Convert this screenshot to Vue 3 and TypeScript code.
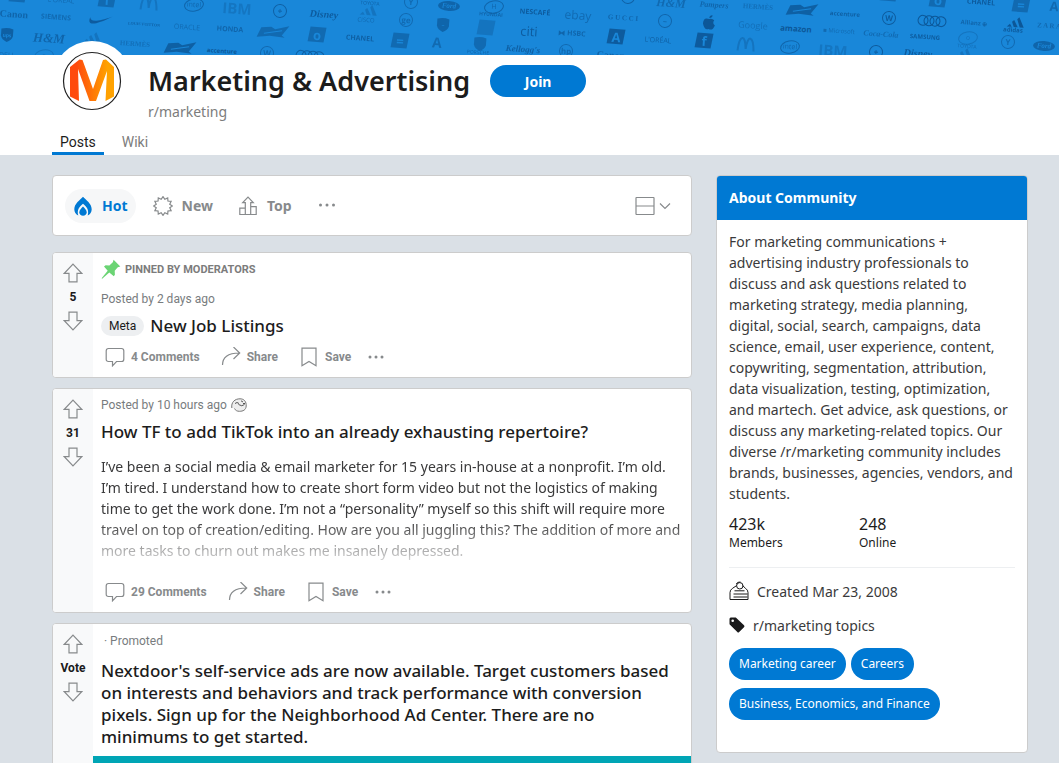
<script setup lang="ts">
import { ref } from 'vue'

type MarkKind = 'text' | 'block' | 'ring' | 'oval' | 'rings' | 'bow' | 'swoosh' | 'shield' | 'apple' | 'peaks' | 'car' | 'arch'

interface Mark {
  x: number
  y: number
  kind: MarkKind
  label?: string
  size?: number
  font?: 'serif' | 'sans' | 'script' | 'heavy'
  tone?: number
}

const marks: Mark[] = [
  { x: 18, y: -5, kind: 'block' },
  { x: 61, y: 0, kind: 'text', label: "L'ORÉAL", size: 7 },
  { x: 107, y: 0, kind: 'block', label: 'f' },
  { x: 149, y: 3, kind: 'arch', tone: 0.4 },
  { x: 194, y: 5, kind: 'oval', label: 'intel', tone: 0.7 },
  { x: 237, y: 8, kind: 'text', label: 'IBM', size: 15, font: 'heavy', tone: 0.35 },
  { x: 280, y: 11, kind: 'ring', label: '+', tone: 0.8 },
  { x: 324, y: 14, kind: 'text', label: 'Disney', size: 10, font: 'script', tone: 0.9 },
  { x: 14, y: 14, kind: 'text', label: 'Canon', size: 10, font: 'serif', tone: 0.7 },
  { x: 56, y: 17, kind: 'text', label: 'SIEMENS', size: 7, font: 'heavy' },
  { x: 101, y: 21, kind: 'swoosh', tone: 0.9 },
  { x: 144, y: 24, kind: 'text', label: 'LOUIS VUITTON', size: 4, font: 'serif', tone: 0.8 },
  { x: 187, y: 27, kind: 'text', label: 'ORACLE', size: 7, tone: 0.6 },
  { x: 230, y: 29, kind: 'text', label: 'HONDA', size: 7, font: 'heavy', tone: 0.7 },
  { x: 273, y: 32, kind: 'bow' },
  { x: 317, y: 35, kind: 'block', label: 'o' },
  { x: 7, y: 35, kind: 'shield', label: 'ups', tone: 0.8 },
  { x: 49, y: 38, kind: 'text', label: 'H&M', size: 13, font: 'script', tone: 0.7 },
  { x: 91, y: 38, kind: 'peaks', tone: 0.4 },
  { x: 135, y: 44, kind: 'text', label: 'HERMÈS', size: 7, font: 'serif', tone: 0.5 },
  { x: 180, y: 48, kind: 'bow', tone: 0.8 },
  { x: 222, y: 51, kind: 'text', label: 'accenture', size: 6, font: 'heavy', tone: 1 },
  { x: 267, y: 53, kind: 'ring', label: 'W' },
  { x: 310, y: 56, kind: 'rings', tone: 0.8 },
  { x: 7, y: 55, kind: 'text', label: 'DELL', size: 7 },
  { x: 44, y: 56, kind: 'oval', label: 'o', tone: 0.4 },
  { x: 370, y: 3, kind: 'text', label: 'TOYOTA', size: 5, tone: 0.8 },
  { x: 411, y: 2, kind: 'ring', label: 'Y' },
  { x: 449, y: 6, kind: 'car', label: 'Ford', tone: 0.7 },
  { x: 494, y: 7, kind: 'oval', label: 'H', tone: 0.7 },
  { x: 491, y: 14, kind: 'text', label: 'HYUNDAI', size: 5, font: 'heavy', tone: 0.7 },
  { x: 535, y: 12, kind: 'text', label: 'NESCAFÉ', size: 7, font: 'heavy', tone: 0.9 },
  { x: 578, y: 15, kind: 'text', label: 'ebay', size: 12, tone: 0.6 },
  { x: 623, y: 18, kind: 'text', label: 'G U C C I', size: 7, font: 'serif', tone: 0.7 },
  { x: 665, y: 21, kind: 'ring', label: '–', tone: 0.7 },
  { x: 628, y: -3, kind: 'ring', tone: 0.8 },
  { x: 671, y: 3, kind: 'text', label: 'H&M', size: 12, font: 'script', tone: 0.6 },
  { x: 367, y: 11, kind: 'peaks', tone: 0.4 },
  { x: 366, y: 20, kind: 'text', label: 'CISCO', size: 6 },
  { x: 406, y: 20, kind: 'ring', label: 'ge' },
  { x: 443, y: 25, kind: 'shield', label: '~', tone: 0.7 },
  { x: 486, y: 28, kind: 'block', tone: 0.4 },
  { x: 529, y: 31, kind: 'text', label: 'citi', size: 13, tone: 0.9 },
  { x: 572, y: 33, kind: 'text', label: '⧓ HSBC', size: 7, font: 'heavy', tone: 0.7 },
  { x: 616, y: 37, kind: 'block', label: 'A', tone: 0.9 },
  { x: 658, y: 40, kind: 'text', label: "L'ORÉAL", size: 7, tone: 0.8 },
  { x: 360, y: 38, kind: 'text', label: 'CHANEL', size: 7, font: 'heavy', tone: 0.8 },
  { x: 400, y: 41, kind: 'block', label: '=' },
  { x: 437, y: 42, kind: 'text', label: 'A', size: 14, font: 'heavy' },
  { x: 480, y: 44, kind: 'shield' },
  { x: 478, y: 52, kind: 'text', label: 'PORSCHE', size: 5, tone: 0.7 },
  { x: 523, y: 49, kind: 'text', label: "Kellogg's", size: 9, font: 'script', tone: 0.8 },
  { x: 566, y: 51, kind: 'ring', label: 'hp' },
  { x: 611, y: 55, kind: 'text', label: 'Canon', size: 10, font: 'serif', tone: 0.7 },
  { x: 714, y: 5, kind: 'text', label: 'Pampers', size: 8, font: 'script', tone: 0.7 },
  { x: 758, y: 7, kind: 'text', label: 'HERMÈS', size: 7, font: 'serif', tone: 0.5 },
  { x: 802, y: 10, kind: 'bow', tone: 0.8 },
  { x: 845, y: 14, kind: 'text', label: 'accenture', size: 6, font: 'heavy', tone: 0.8 },
  { x: 889, y: 18, kind: 'ring', label: 'W', tone: 0.9 },
  { x: 932, y: 21, kind: 'rings', tone: 1 },
  { x: 974, y: 23, kind: 'text', label: 'Allianz ⊕', size: 6, font: 'heavy', tone: 0.7 },
  { x: 1014, y: 23, kind: 'peaks', tone: 1 },
  { x: 1013, y: 30, kind: 'text', label: 'adidas', size: 6, font: 'heavy', tone: 0.9 },
  { x: 1049, y: 26, kind: 'text', label: 'Z A R A', size: 7, font: 'serif' },
  { x: 709, y: 23, kind: 'apple', tone: 1 },
  { x: 753, y: 25, kind: 'text', label: 'Google', size: 9, tone: 0.5 },
  { x: 796, y: 28, kind: 'text', label: 'amazon', size: 8, font: 'heavy', tone: 1 },
  { x: 839, y: 31, kind: 'text', label: '■ Microsoft', size: 6, tone: 0.6 },
  { x: 881, y: 34, kind: 'text', label: 'Coca-Cola', size: 8, font: 'script' },
  { x: 925, y: 37, kind: 'text', label: 'SAMSUNG', size: 6, font: 'heavy', tone: 0.9 },
  { x: 968, y: 38, kind: 'oval', label: 'o', tone: 0.4 },
  { x: 967, y: 46, kind: 'text', label: 'TOYOTA', size: 5 },
  { x: 1008, y: 42, kind: 'ring', label: 'Y' },
  { x: 1044, y: 46, kind: 'car', label: 'Ford', tone: 0.7 },
  { x: 704, y: 41, kind: 'block', label: 'f', tone: 0.9 },
  { x: 746, y: 44, kind: 'arch', tone: 0.4 },
  { x: 790, y: 47, kind: 'oval', label: 'intel', tone: 0.7 },
  { x: 833, y: 50, kind: 'text', label: 'IBM', size: 15, font: 'heavy', tone: 0.35 },
  { x: 876, y: 52, kind: 'ring', label: '+', tone: 0.9 },
  { x: 918, y: 53, kind: 'text', label: 'Disney', size: 10, font: 'script', tone: 0.9 },
  { x: 962, y: 54, kind: 'peaks', tone: 0.4 },
  { x: 889, y: -6, kind: 'block' },
  { x: 938, y: 0, kind: 'block', label: 'o' },
  { x: 981, y: 2, kind: 'text', label: 'CHANEL', size: 7, font: 'heavy', tone: 0.9 },
  { x: 1021, y: 5, kind: 'block', label: '=' },
  { x: 1054, y: 6, kind: 'text', label: 'A', size: 13, font: 'heavy' },
]

const burst = Array.from({ length: 24 }, (_, i) => {
  const r = i % 2 === 0 ? 9.4 : 7
  const a = (i * Math.PI) / 12
  return `${(10 + r * Math.sin(a)).toFixed(2)},${(10 - r * Math.cos(a)).toFixed(2)}`
}).join(' ')

interface Post {
  id: number
  score: string
  meta: string
  title: string
  comments?: string
  pinned?: boolean
  flair?: string
  award?: boolean
  body?: string
  promoted?: boolean
}

const posts: Post[] = [
  { id: 1, score: '5', meta: 'Posted by 2 days ago', title: 'New Job Listings', comments: '4 Comments', pinned: true, flair: 'Meta' },
  {
    id: 2,
    score: '31',
    meta: 'Posted by 10 hours ago',
    title: 'How TF to add TikTok into an already exhausting repertoire?',
    comments: '29 Comments',
    award: true,
    body: 'I’ve been a social media & email marketer for 15 years in-house at a nonprofit. I’m old. I’m tired. I understand how to create short form video but not the logistics of making time to get the work done. I’m not a “personality” myself so this shift will require more travel on top of creation/editing. How are you all juggling this? The addition of more and more tasks to churn out makes me insanely depressed.',
  },
  {
    id: 3,
    score: 'Vote',
    meta: '· Promoted',
    title: "Nextdoor's self-service ads are now available. Target customers based on interests and behaviors and track performance with conversion pixels. Sign up for the Neighborhood Ad Center. There are no minimums to get started.",
    promoted: true,
  },
]

const topics = ['Marketing career', 'Careers', 'Business, Economics, and Finance']
const sort = ref('Hot')
</script>

<template>
  <div class="page">
    <div class="banner">
      <svg class="pattern" viewBox="0 0 1059 55" preserveAspectRatio="xMidYMid slice" aria-hidden="true">
        <g
          v-for="(m, i) in marks"
          :key="i"
          :transform="`translate(${m.x} ${m.y}) rotate(4)`"
          :opacity="m.tone ?? 0.6"
        >
          <text
            v-if="m.kind === 'text'"
            text-anchor="middle"
            dominant-baseline="central"
            :font-size="m.size"
            :class="m.font ?? 'sans'"
          >{{ m.label }}</text>
          <template v-else-if="m.kind === 'block'">
            <path d="M-7 -8H9L7 7H-9Z" />
            <text v-if="m.label" class="cut heavy" text-anchor="middle" y="5" font-size="13">{{ m.label }}</text>
          </template>
          <template v-else-if="m.kind === 'ring'">
            <circle r="6.500" class="line" />
            <text v-if="m.label" class="heavy" text-anchor="middle" y="3" font-size="8">{{ m.label }}</text>
          </template>
          <template v-else-if="m.kind === 'oval'">
            <ellipse rx="9.500" ry="6" class="line" transform="rotate(-14)" />
            <text class="sans" text-anchor="middle" y="2" font-size="7">{{ m.label }}</text>
          </template>
          <template v-else-if="m.kind === 'car'">
            <ellipse rx="11" ry="5" />
            <text class="cut script" text-anchor="middle" y="2" font-size="7">{{ m.label }}</text>
          </template>
          <g v-else-if="m.kind === 'rings'" class="line">
            <circle v-for="n in 4" :key="n" :cx="n * 6 - 15" r="5" />
          </g>
          <template v-else-if="m.kind === 'bow'">
            <path d="M-12 -4L-2 -5L2 -3L16 -7L9 3L12 5L-3 4L-16 6Z" />
            <path class="cutline" d="M-9 2L9 -2" />
          </template>
          <path v-else-if="m.kind === 'arch'" class="line arch" d="M-8 7C-7 -9 -1 -10 0 5C1 -10 7 -9 8 7" />
          <path v-else-if="m.kind === 'swoosh'" d="M-11 -3C-14 6 -6 5 11 -5C-4 1 -10 2 -11 -3Z" />
          <template v-else-if="m.kind === 'shield'">
            <path d="M-6 -6Q0 -8 6 -6V1Q5 5 0 7Q-5 5 -6 1Z" />
            <text v-if="m.label" class="cut heavy" text-anchor="middle" y="2" font-size="5">{{ m.label }}</text>
          </template>
          <path v-else-if="m.kind === 'apple'" d="M0 -4Q-6 -6 -6 1Q-4 8 0 6Q4 8 6 2Q3 0 5 -3Q3 -5 0 -4ZM0 -5Q0 -8 3 -8Q3 -5 0 -5Z" />
          <path v-else d="M-7 4L-4 1L-2 4ZM-2 -1L0 -3L4 4H0ZM3 -4L5 -6L10 4H6Z" />
        </g>
      </svg>
    </div>

    <header class="header">
      <div class="identity">
        <span class="avatar">
          <svg viewBox="0 0 60 60" aria-hidden="true">
            <defs>
              <linearGradient id="flame" x1="0" x2="1">
                <stop offset="0.15" stop-color="#ff4a0d" />
                <stop offset="0.85" stop-color="#ffa200" />
              </linearGradient>
            </defs>
            <circle cx="30" cy="30" r="28.5" fill="#fff" stroke="#222" stroke-width="1.2" />
            <path
              fill="url(#flame)"
              d="M17.500 8.500L20.500 9L31 38L41 9L44 8.500L52 16V45.500L43.500 50L45 20L34 50H27.500L16 18L17 50L8 45.500V16Z"
            />
          </svg>
        </span>
        <div class="names">
          <div class="title-row">
            <h1>Marketing &amp; Advertising</h1>
            <button class="join" type="button">Join</button>
          </div>
          <p class="handle">r/marketing</p>
        </div>
      </div>
      <nav class="tabs">
        <a href="#posts" class="tab active">Posts</a>
        <a href="#wiki" class="tab">Wiki</a>
      </nav>
    </header>

    <div class="content">
      <main class="feed">
        <div class="card sorting">
          <button type="button" class="sort" :class="{ on: sort === 'Hot' }" @click="sort = 'Hot'">
            <svg class="icon" viewBox="0 0 20 20" aria-hidden="true">
              <path fill="currentColor" d="M10 .7C7 4 1.300 7.500 1.300 13.200C1.300 16 2.800 18.500 5.300 19.500C3.800 14.500 6 10.800 10 7.800C14 10.800 16.200 14.500 14.700 19.500C17.200 18.500 18.700 16 18.700 13.200C18.700 7.500 13 4 10 .7Z" />
              <path fill="currentColor" d="M10 10.500C8 12.500 6.300 14.200 6.300 16.500C6.300 18.500 8 19.700 10 19.700S13.700 18.500 13.700 16.500C13.700 14.200 12 12.500 10 10.500Z" />
            </svg>
            Hot
          </button>
          <button type="button" class="sort" :class="{ on: sort === 'New' }" @click="sort = 'New'">
            <svg class="icon stroke" viewBox="0 0 20 20" aria-hidden="true"><polygon :points="burst" /></svg>
            New
          </button>
          <button type="button" class="sort" :class="{ on: sort === 'Top' }" @click="sort = 'Top'">
            <svg class="icon stroke" viewBox="0 0 20 20" aria-hidden="true">
              <path d="M7.300 18.500V6.700H4.700L10 1.200L15.300 6.700H12.700V18.500M7.300 12.200H1.800V18.500H18.200V10.700H12.700" />
            </svg>
            Top
          </button>
          <button type="button" class="more" aria-label="More sort options">
            <svg class="icon dots" viewBox="0 0 20 20" aria-hidden="true"><circle cx="3.500" cy="9" r="1.500" /><circle cx="10" cy="9" r="1.500" /><circle cx="16.500" cy="9" r="1.500" /></svg>
          </button>
          <button type="button" class="view" aria-label="Change layout">
            <svg class="icon stroke" viewBox="0 0 20 20" aria-hidden="true"><rect x="1" y="1.500" width="18" height="17" rx=".5" /><path d="M1 10H19" /></svg>
            <svg class="chevron stroke" viewBox="0 0 12 12" aria-hidden="true"><path d="M1 3.500L6 8.500L11 3.500" /></svg>
          </button>
        </div>

        <article v-for="p in posts" :key="p.id" class="card post" :class="{ ad: p.promoted }">
          <div class="votes">
            <button type="button" aria-label="Upvote">
              <svg class="icon stroke" viewBox="0 0 20 20" aria-hidden="true"><path d="M10 1.200L18.700 10.300H14V18.800H6V10.300H1.300Z" /></svg>
            </button>
            <span class="score">{{ p.score }}</span>
            <button type="button" aria-label="Downvote">
              <svg class="icon stroke" viewBox="0 0 20 20" aria-hidden="true"><path d="M10 18.800L18.700 9.700H14V1.200H6V9.700H1.300Z" /></svg>
            </button>
          </div>
          <div class="main">
            <p v-if="p.pinned" class="pinned">
              <svg class="icon pin" viewBox="0 0 20 20" aria-hidden="true">
                <path d="M12.600 .8L19.300 7.500L16.800 8.300L13.700 11.800L13.900 15.700L12.800 17.200L8.300 13.400L1.200 19.800L.6 19.200L6.700 11.800L3 7.400L4.600 6.200L8.400 6.500L11.800 3.300Z" />
              </svg>
              PINNED BY MODERATORS
            </p>
            <p class="meta">
              {{ p.meta }}
              <svg v-if="p.award" class="award" viewBox="0 0 16 14" aria-hidden="true">
                <path fill="#eee" stroke="#777" d="M.8 10C0 4 4 .8 9 .8C13 .8 15.500 3.500 15.200 8C15 12 12 13.300 8.500 13.300C6 13.300 4.500 12.500 3.500 10.500" />
                <path fill="none" stroke="#555" d="M4 5.500Q6 3.500 8 5.500M10 2.800L12 4M7.500 6.500Q11 9 13.500 6.500M12 5.500H14" />
              </svg>
            </p>
            <div class="headline">
              <a v-if="p.flair" href="#meta" class="flair">{{ p.flair }}</a>
              <h2>{{ p.title }}</h2>
            </div>
            <p v-if="p.body" class="body">{{ p.body }}</p>
            <div v-if="p.comments" class="actions">
              <button type="button">
                <svg class="icon stroke" viewBox="0 0 20 20" aria-hidden="true"><path d="M3.500 1.500H16.500Q18.800 1.500 18.800 3.800V12.200Q18.800 14.500 16.500 14.500H11.500L7.500 18.800V14.500H3.500Q1.200 14.500 1.200 12.200V3.800Q1.200 1.500 3.500 1.500Z" /></svg>
                {{ p.comments }}
              </button>
              <button type="button">
                <svg class="icon stroke" viewBox="0 0 20 20" aria-hidden="true"><path d="M1.500 18C1.500 10.500 6.500 6 18.500 6M12.500 0L18.700 6L12.500 12" /></svg>
                Share
              </button>
              <button type="button">
                <svg class="icon stroke" viewBox="0 0 20 20" aria-hidden="true"><path d="M3 1.200H17V18.800L10 14.500L3 18.800Z" /></svg>
                Save
              </button>
              <button type="button" class="overflow" aria-label="More actions">
                <svg class="icon dots" viewBox="0 0 20 20" aria-hidden="true"><circle cx="4" cy="10" r="1.500" /><circle cx="10" cy="10" r="1.500" /><circle cx="16" cy="10" r="1.500" /></svg>
              </button>
            </div>
            <div v-if="p.promoted" class="media"></div>
          </div>
        </article>
      </main>

      <aside class="card about">
        <h2 class="about-title">About Community</h2>
        <div class="about-body">
          <p class="description">
            For marketing communications + advertising industry professionals to discuss and ask questions
            related to marketing strategy, media planning, digital, social, search, campaigns, data science,
            email, user experience, content, copywriting, segmentation, attribution, data visualization,
            testing, optimization, and martech. Get advice, ask questions, or discuss any marketing-related
            topics. Our diverse /r/marketing community includes brands, businesses, agencies, vendors, and
            students.
          </p>
          <dl class="stats">
            <div><dd>423k</dd><dt>Members</dt></div>
            <div><dd>248</dd><dt>Online</dt></div>
          </dl>
          <hr />
          <p class="fact created">
            <svg class="icon cake" viewBox="0 0 20 20" aria-hidden="true">
              <path d="M7.800 4.500L3.500 7.300Q1 9 1 11.500V18.500H19V11.500Q19 9 16.500 7.300L13.500 4.500M5.500 9.800H15.500M4.500 13H18.500M4.500 16H18.500" />
              <circle cx="10.800" cy="4.800" r="3.200" /><path d="M7 3.200Q8.500 .6 11.500 1" />
            </svg>
            Created Mar 23, 2008
          </p>
          <p class="fact">
            <svg class="tag" viewBox="0 0 16 16" aria-hidden="true">
              <path fill="#1a1a1b" fill-rule="evenodd" d="M1.800 .5H6.800L15 8.300Q16 9.300 15 10.200L10.200 15Q9.300 16 8.300 15L.5 7.300V2Q.5 .5 1.800 .5ZM3.700 2.400A1.300 1.300 0 1 0 3.700 5A1.300 1.300 0 1 0 3.700 2.400Z" />
            </svg>
            r/marketing topics
          </p>
          <div class="chips">
            <a v-for="t in topics" :key="t" href="#topic" class="chip">{{ t }}</a>
          </div>
        </div>
      </aside>
    </div>
  </div>
</template>

<style>
body {
  margin: 0;
}
</style>

<style scoped>
* {
  box-sizing: border-box;
}

h1, h2, p, dl, dd, dt {
  margin: 0;
}

button {
  border: 0;
  padding: 0;
  background: none;
  color: inherit;
  font: inherit;
  cursor: pointer;
}

a {
  color: inherit;
  text-decoration: none;
}

.page {
  height: 100vh;
  overflow: hidden;
  background: #dae0e6;
  color: #1c1c1c;
  font-family: Roboto, "Liberation Sans", sans-serif;
}

.banner {
  height: 55px;
  background: #1987d9;
}

.pattern {
  display: block;
  width: 100%;
  height: 100%;
  fill: #0c5798;
  stroke: none;
}

.line {
  fill: none;
  stroke: #0c5798;
  stroke-width: 1;
}

.arch {
  stroke-width: 2;
}

.cut {
  fill: #1987d9;
}

.cutline {
  stroke: #1987d9;
}

.sans {
  font-family: "Open Sans", sans-serif;
}

.heavy {
  font-family: "Open Sans", sans-serif;
  font-weight: 700;
}

.serif {
  font-family: "Liberation Serif", serif;
  font-weight: 700;
}

.script {
  font-family: "Liberation Serif", serif;
  font-style: italic;
  font-weight: 700;
}

.header {
  display: flex;
  flex-direction: column;
  justify-content: space-between;
  height: 100px;
  padding: 0 52px;
  background: #fff;
}

.identity {
  display: flex;
  gap: 16px;
}

.avatar {
  display: grid;
  place-items: center;
  width: 80px;
  height: 80px;
  margin-top: -14px;
  border-radius: 50%;
  background: #fff;
}

.avatar svg {
  width: 60px;
  height: 60px;
}

.title-row {
  display: flex;
  align-items: center;
  gap: 20px;
  padding-top: 10px;
}

h1 {
  font-family: "Noto Sans", sans-serif;
  font-size: 27px;
  line-height: 32px;
  font-weight: 600;
}

.join {
  width: 96px;
  height: 32px;
  border-radius: 16px;
  background: #0079d3;
  color: #fff;
  font-family: "Noto Sans", sans-serif;
  font-size: 14px;
  font-weight: 700;
}

.handle {
  padding-top: 6px;
  color: #7c7c7c;
  font-family: "Noto Sans", sans-serif;
  font-size: 14px;
  line-height: 18px;
}

.tabs {
  display: flex;
  gap: 10px;
}

.tab {
  padding: 0 8px 1px;
  border-bottom: 3px solid transparent;
  color: #7c7c7c;
  font-size: 14px;
  line-height: 18px;
}

.tab.active {
  border-color: #0079d3;
  color: #1c1c1c;
}

.content {
  display: grid;
  grid-template-columns: minmax(0, 1fr) 312px;
  align-items: start;
  gap: 24px;
  padding: 20px 31px 0 52px;
}

.feed {
  display: flex;
  flex-direction: column;
  gap: 10px;
}

.card {
  overflow: hidden;
  border: 1px solid #ccc;
  border-radius: 4px;
  background: #fff;
}

.icon {
  flex: none;
  width: 20px;
  height: 20px;
}

.stroke {
  fill: none;
  stroke: currentColor;
  stroke-width: 1.2;
}

.dots {
  fill: currentColor;
}

.sorting {
  display: flex;
  align-items: center;
  height: 61px;
  margin-bottom: 6px;
  padding: 0 20px 0 12px;
  color: #878a8c;
}

.sort {
  display: flex;
  align-items: center;
  gap: 9px;
  height: 34px;
  margin-right: 9px;
  padding: 0 8px;
  border-radius: 17px;
  font-family: "Noto Sans", sans-serif;
  font-size: 14px;
  line-height: 20px;
  font-weight: 700;
}

.sort.on {
  background: #f6f7f8;
  color: #0079d3;
}

.more {
  display: flex;
  padding: 0 8px;
}

.view {
  display: flex;
  align-items: center;
  gap: 4px;
  margin-left: auto;
}

.chevron {
  width: 12px;
  height: 12px;
}

.post {
  display: grid;
  grid-template-columns: 40px minmax(0, 1fr);
}

.votes {
  display: flex;
  flex-direction: column;
  align-items: center;
  padding-top: 10px;
  background: #f8f9fa;
  color: #878a8c;
}

.votes button {
  display: flex;
}

.score {
  color: #1a1a1b;
  font-size: 12px;
  line-height: 28px;
  font-weight: 700;
}

.main {
  padding: 8px 8px 0;
}

.pinned {
  display: flex;
  align-items: center;
  gap: 4px;
  height: 16px;
  margin-bottom: 14px;
  color: #7c7c7c;
  font-size: 11px;
  font-weight: 700;
}

.pin {
  fill: #6bd474;
}

.meta {
  display: flex;
  align-items: center;
  gap: 4px;
  color: #787c7e;
  font-size: 12px;
  line-height: 16px;
}

.award {
  width: 16px;
  height: 14px;
}

.headline {
  display: flex;
  align-items: center;
  gap: 6px;
  padding-top: 8px;
}

.headline h2 {
  font-family: "Noto Sans", sans-serif;
  font-size: 17px;
  line-height: 22px;
  font-weight: 500;
}

.flair {
  padding: 0 8px;
  border-radius: 20px;
  background: #edeff1;
  color: #1a1a1b;
  font-size: 12px;
  line-height: 20px;
}

.body {
  margin: 8px 0 0;
  padding: 5px 0 11px;
  color: #3a3a3b;
  font-family: "Noto Sans", sans-serif;
  font-size: 14px;
  line-height: 21px;
  mask-image: linear-gradient(#000 58%, transparent 100%);
}

.actions {
  display: flex;
  align-items: center;
  gap: 5px;
  height: 40px;
  margin-left: -4px;
  color: #878a8c;
  font-size: 12px;
  font-weight: 700;
}

.actions button {
  display: flex;
  align-items: center;
  gap: 6px;
  padding: 0 8px;
}

.actions .overflow {
  padding: 0 2px;
}

.ad .meta {
  padding: 1px 0 0 3px;
}

.ad .headline {
  padding: 11px 6px 8px 0;
}

.media {
  height: 80px;
  margin: 0 -8px;
  background: #00a5b5;
}

.about-title {
  padding: 0 12px;
  background: #0079d3;
  color: #fff;
  font-family: "Noto Sans", sans-serif;
  font-size: 14px;
  line-height: 44px;
  font-weight: 700;
}

.about-body {
  padding: 11px 12px 32px;
  color: #3a3a3b;
  font-family: "Noto Sans", sans-serif;
  font-size: 14px;
}

.description {
  line-height: 21px;
}

.stats {
  display: grid;
  grid-template-columns: 130px 1fr;
  padding-top: 10px;
  color: #1c1c1c;
}

.stats div {
  display: flex;
  flex-direction: column;
}

.stats dd {
  font-size: 16px;
  line-height: 20px;
}

.stats dt {
  font-size: 12px;
  line-height: 18px;
}

hr {
  height: 1px;
  margin: 15px 0 13px;
  border: 0;
  background: #edeff1;
}

.fact {
  display: flex;
  align-items: center;
  gap: 8px;
  height: 20px;
}

.created {
  margin-bottom: 14px;
}

.cake {
  fill: none;
  stroke: #1a1a1b;
}

.tag {
  width: 16px;
  height: 16px;
}

.chips {
  display: flex;
  flex-wrap: wrap;
  gap: 8px 5px;
  padding-top: 13px;
}

.chip {
  padding: 0 10px;
  border-radius: 16px;
  background: #0079d3;
  color: #fff;
  font-size: 12px;
  line-height: 32px;
}
</style>
